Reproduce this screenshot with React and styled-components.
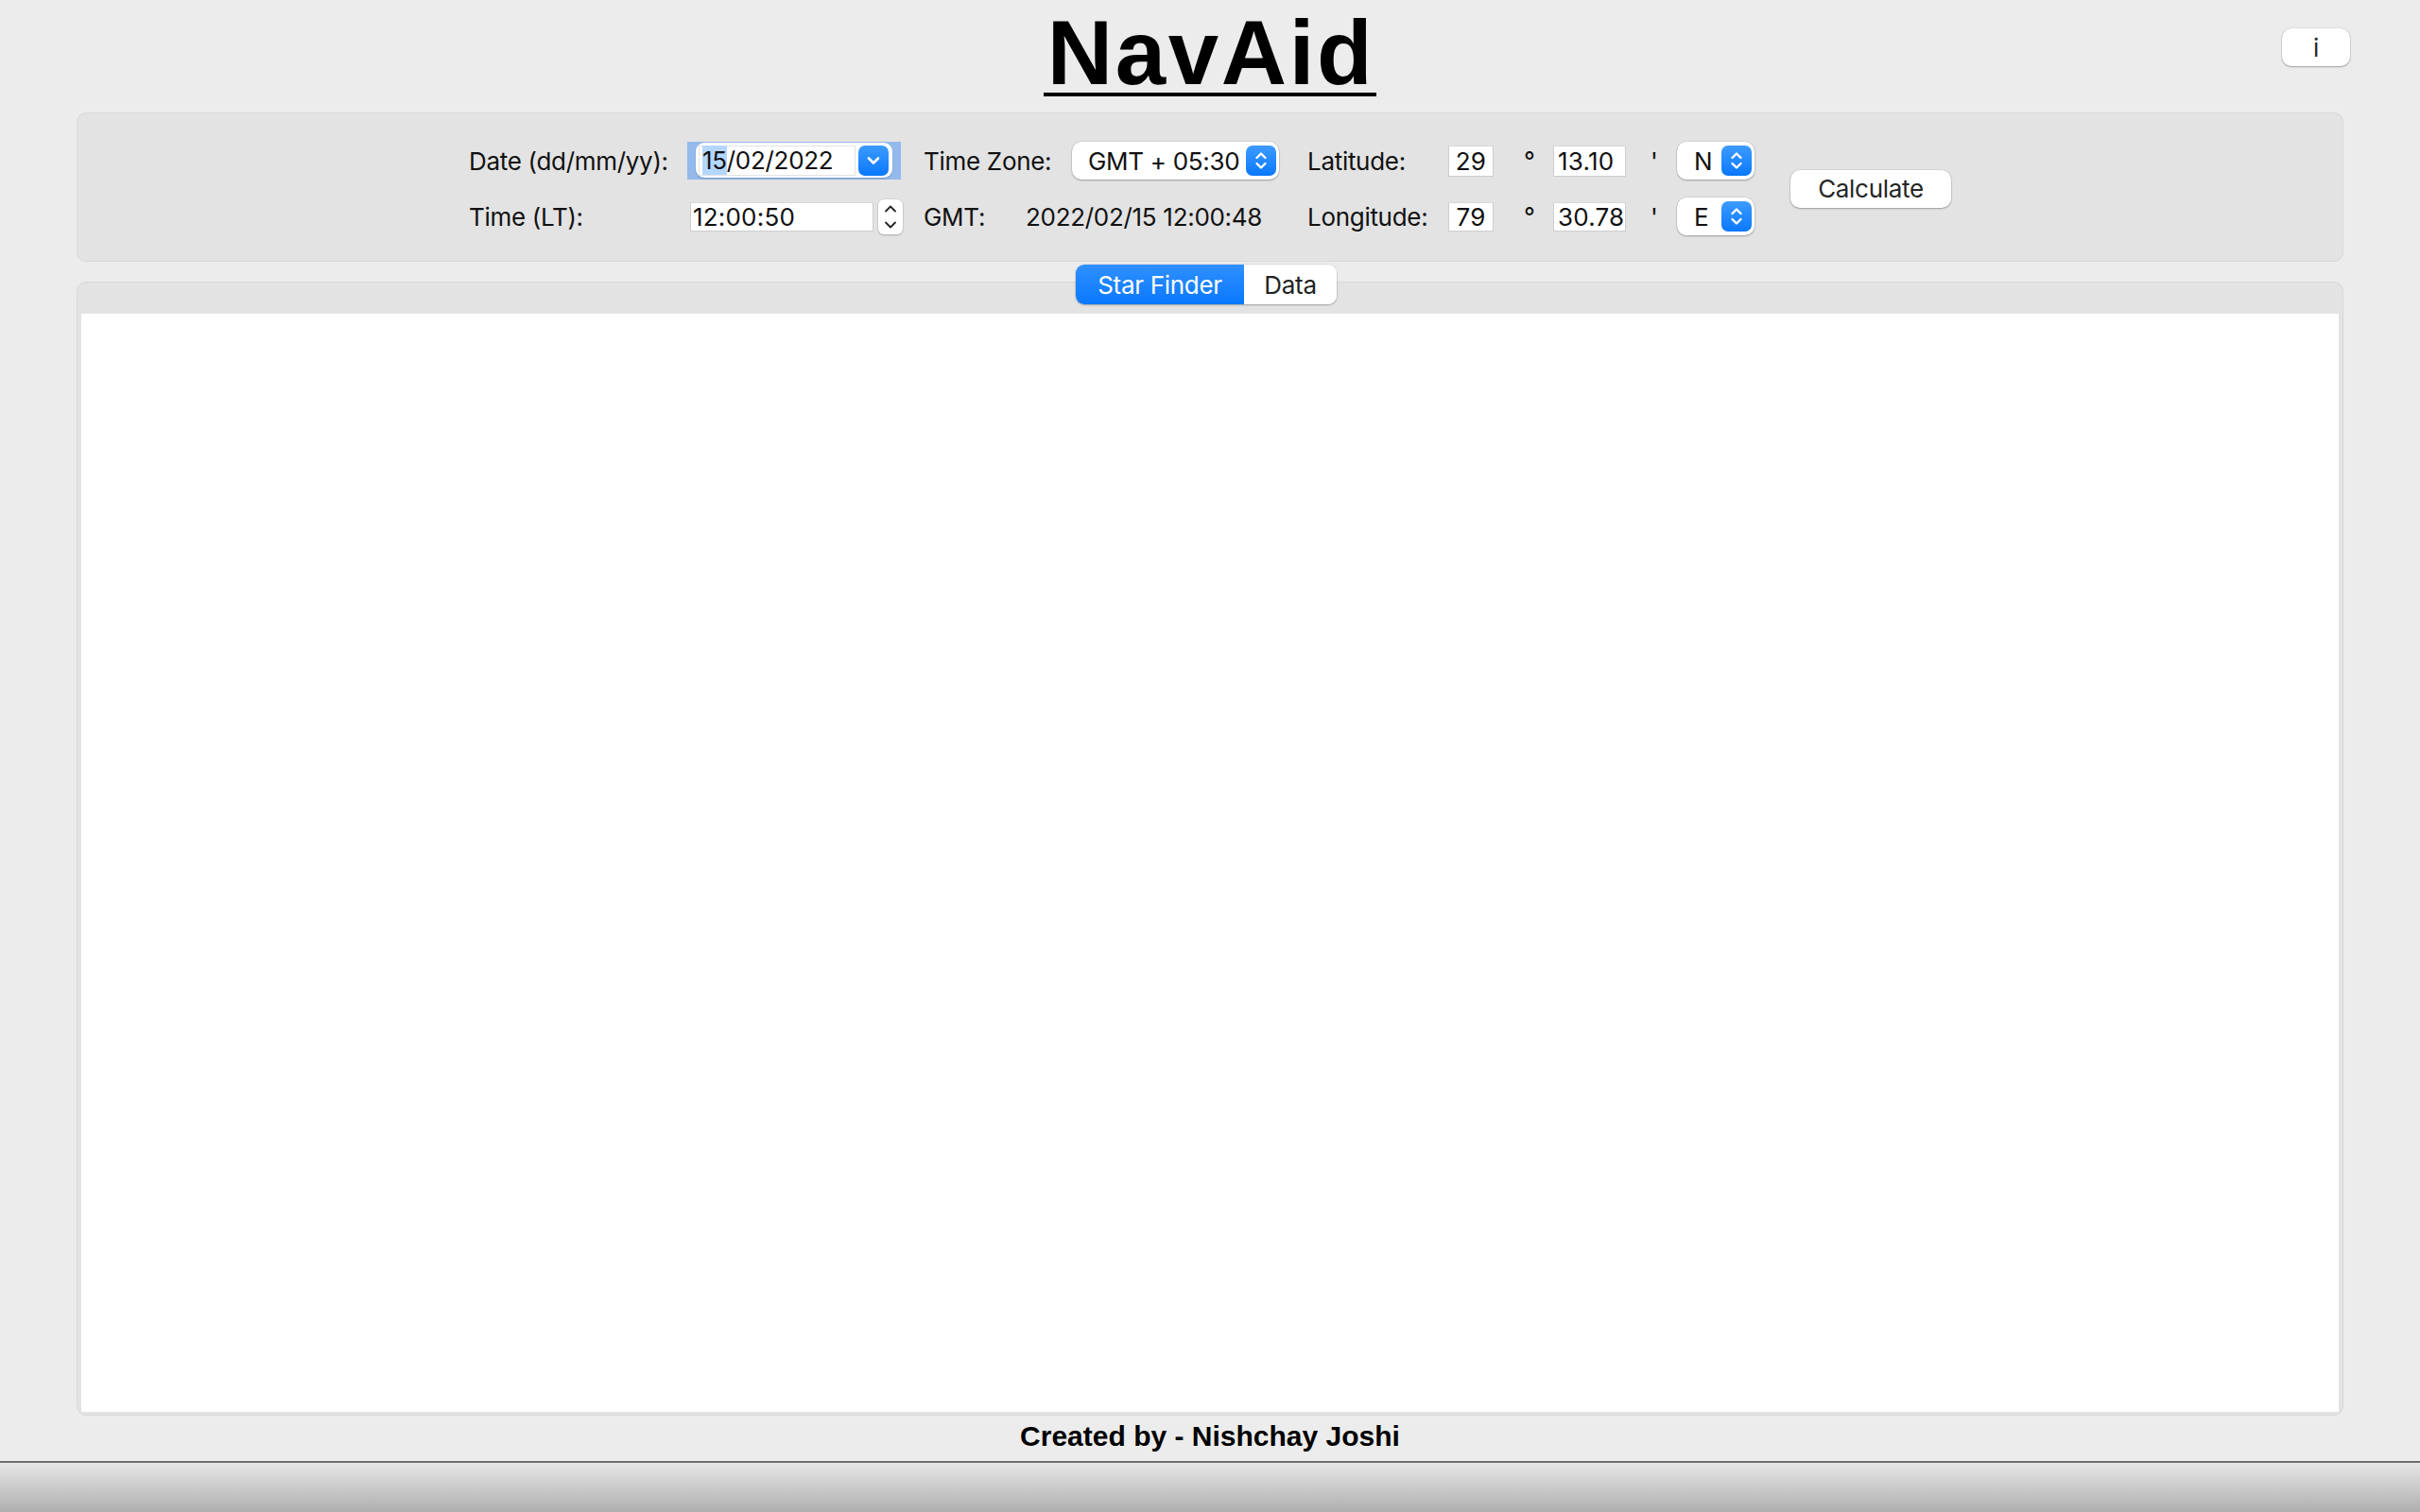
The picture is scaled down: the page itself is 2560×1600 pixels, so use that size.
import React from "react";
import styled, { createGlobalStyle } from "styled-components";

const GlobalStyle = createGlobalStyle`
  html, body { margin: 0; padding: 0; background: #ececec; }
  body { font-family: Inter, "Noto Sans", sans-serif; color: #111; letter-spacing: -0.3px; }
  * { box-sizing: border-box; }
`;

const Page = styled.div`
  height: 100vh;
  display: flex;
  flex-direction: column;
`;

const Header = styled.header`
  flex: none;
  height: 119px;
  display: grid;
  grid-template-columns: 1fr auto 1fr;
  align-items: start;
  padding: 14px 0 0;
`;

const Title = styled.h1`
  grid-column: 2;
  margin: 0;
  padding: 0 2px 0 4px;
  font-family: "Liberation Sans", Arial, sans-serif;
  font-weight: 700;
  font-size: 96px;
  line-height: 84px;
  letter-spacing: 2.6px;
  color: #000;
  border-bottom: 4px solid #000;
`;

const MacButton = styled.button`
  background: #fff;
  border: none;
  border-radius: 10px;
  box-shadow: 0 0 0 0.5px rgba(0, 0, 0, 0.12), 0 1px 2px rgba(0, 0, 0, 0.28);
  font-family: Inter, "Noto Sans", sans-serif;
  font-size: 26px;
  letter-spacing: -0.3px;
  color: #262626;
  padding: 0;
  cursor: default;
`;

const InfoButton = styled(MacButton)`
  grid-column: 3;
  justify-self: end;
  width: 72px;
  height: 40px;
  margin: 16px 74px 0 0;
`;

const TopPanel = styled.section`
  flex: none;
  height: 158px;
  margin: 0 81px;
  background: #e3e3e3;
  border: 1px solid #d9d9d9;
  border-radius: 10px;
  padding: 28px 0 25px;
  display: grid;
  grid-template-columns: 231px 250px 108px 298px 149px 80px 31px 103px 28px 120px 170px;
  grid-template-rows: 44px 44px;
  row-gap: 15px;
  align-items: center;
  justify-content: center;
`;

const Label = styled.span`
  font-size: 26px;
  white-space: nowrap;
  color: #111;
`;

const Unit = styled(Label)`
  align-self: center;
  margin-top: ${(p) => p.$top || 0}px;
`;

const Knob = styled.span`
  flex: none;
  width: 32px;
  height: 32px;
  border-radius: 7px;
  background: linear-gradient(#3d9bff, #0a78ff);
  display: flex;
  align-items: center;
  justify-content: center;
`;

const Popup = styled.div`
  width: ${(p) => p.$w}px;
  height: 40px;
  margin-left: ${(p) => p.$ml || 0}px;
  background: #fff;
  border-radius: 10px;
  box-shadow: 0 0 0 0.5px rgba(0, 0, 0, 0.12), 0 1px 2px rgba(0, 0, 0, 0.28);
  display: flex;
  align-items: center;
  justify-content: space-between;
  padding: 0 3px 0 ${(p) => p.$pl}px;
  font-size: 26px;
  color: #111;
  white-space: nowrap;
`;

const FocusRing = styled.div`
  width: 226px;
  height: 40px;
  background: #94b9ec;
  padding: 1px 9px 2px;
`;

const ComboBody = styled.div`
  height: 100%;
  background: #fff;
  border-radius: 9px;
  box-shadow: 0 1px 2px rgba(0, 0, 0, 0.2);
  display: flex;
  align-items: center;
  gap: 3px;
  padding: 0 4px 0 3px;
`;

const ComboText = styled.div`
  width: 166px;
  height: 32px;
  border: 1px solid #e2e2e2;
  font-size: 26px;
  line-height: 30px;
  padding-left: 3px;
  color: #111;
`;

const Selected = styled.span`
  background: #b3d7ff;
`;

const TimeGroup = styled.div`
  display: flex;
  align-items: center;
  gap: 5px;
  padding-left: 3px;
`;

const Field = styled.div`
  width: ${(p) => p.$w}px;
  height: ${(p) => p.$h || 32}px;
  background: #fff;
  border: 1px solid #cdcdcd;
  border-top-color: #d8d8d8;
  font-size: 26px;
  line-height: ${(p) => (p.$h || 32) - 2}px;
  text-align: ${(p) => p.$align || "left"};
  padding: 0 ${(p) => p.$pad || 2}px;
  color: #111;
  white-space: nowrap;
  letter-spacing: 0.2px;
`;

const Stepper = styled.div`
  width: 26px;
  height: 37px;
  background: #fff;
  border-radius: 6px;
  box-shadow: 0 0 0 0.5px rgba(0, 0, 0, 0.1), 0 1px 2px rgba(0, 0, 0, 0.22);
  display: flex;
  flex-direction: column;
  align-items: center;
  justify-content: space-between;
  padding: 6px 0;
`;

const CalcButton = styled(MacButton)`
  grid-row: span 2;
  width: 170px;
  height: 40px;
`;

const TabSection = styled.div`
  flex: 1;
  display: flex;
  flex-direction: column;
  margin-top: 3px;
  min-height: 0;
`;

const TabBar = styled.div`
  flex: none;
  height: 42px;
  display: flex;
  justify-content: center;
  padding-right: 8px;
  position: relative;
  z-index: 1;
`;

const Segmented = styled.div`
  display: flex;
  background: #fff;
  border-radius: 9px;
  overflow: hidden;
  box-shadow: 0 0 0 0.5px rgba(0, 0, 0, 0.12), 0 1px 2px rgba(0, 0, 0, 0.25);
`;

const Tab = styled.div`
  width: ${(p) => p.$w}px;
  height: 42px;
  display: flex;
  align-items: center;
  justify-content: center;
  font-size: 26px;
  color: ${(p) => (p.$active ? "#fff" : "#222")};
  background: ${(p) => (p.$active ? "linear-gradient(#2f90ff, #0a78ff)" : "#fff")};
`;

const TabPanel = styled.div`
  flex: 1;
  margin: -24px 81px 0;
  background: #e3e3e3;
  border: 1px solid #d8d8d8;
  border-radius: 10px;
  padding: 33px 4px 3px;
  display: flex;
`;

const Canvas = styled.div`
  flex: 1;
  background: #fff;
`;

const Footer = styled.footer`
  flex: none;
  height: 48px;
  line-height: 43px;
  padding-bottom: 5px;
  text-align: center;
  font-family: "Liberation Sans", Arial, sans-serif;
  font-weight: 700;
  font-size: 30px;
  letter-spacing: 0;
  color: #000;
`;

const BottomBar = styled.div`
  flex: none;
  height: 54px;
  border-top: 2px solid #6d6d6d;
  background: linear-gradient(#e6e6e6, #afafaf);
`;

const UpDown = ({ color = "#fff" }) => (
  <svg width="16" height="22" viewBox="0 0 16 22" fill="none">
    <path d="M3.5 8 L8 3.5 L12.5 8" stroke={color} strokeWidth="2.4" strokeLinecap="round" strokeLinejoin="round" />
    <path d="M3.5 14 L8 18.5 L12.5 14" stroke={color} strokeWidth="2.4" strokeLinecap="round" strokeLinejoin="round" />
  </svg>
);

const Down = () => (
  <svg width="16" height="10" viewBox="0 0 16 10" fill="none">
    <path d="M3 2.5 L8 7.5 L13 2.5" stroke="#fff" strokeWidth="2.6" strokeLinecap="round" strokeLinejoin="round" />
  </svg>
);

const Chevron = ({ up }) => (
  <svg width="14" height="8" viewBox="0 0 14 8" fill="none">
    <path d={up ? "M2 6.5 L7 1.5 L12 6.5" : "M2 1.5 L7 6.5 L12 1.5"} stroke="#222" strokeWidth="1.8" strokeLinecap="round" strokeLinejoin="round" />
  </svg>
);

export default function App() {
  return (
    <Page>
      <GlobalStyle />
      <Header>
        <Title>NavAid</Title>
        <InfoButton>i</InfoButton>
      </Header>

      <TopPanel>
        <Label>Date (dd/mm/yy):</Label>
        <FocusRing>
          <ComboBody>
            <ComboText>
              <Selected>15</Selected>/02/2022
            </ComboText>
            <Knob>
              <Down />
            </Knob>
          </ComboBody>
        </FocusRing>
        <Label>Time Zone:</Label>
        <Popup $w={219} $ml={49} $pl={17}>
          GMT + 05:30
          <Knob>
            <UpDown />
          </Knob>
        </Popup>
        <Label>Latitude:</Label>
        <Field $w={48} $h={33} $align="center">29</Field>
        <Unit $top={-2}>°</Unit>
        <Field $w={77} $h={33} $pad={4}>13.10</Field>
        <Unit>'</Unit>
        <Popup $w={82} $pl={18}>
          N
          <Knob>
            <UpDown />
          </Knob>
        </Popup>
        <CalcButton>Calculate</CalcButton>

        <Label>Time (LT):</Label>
        <TimeGroup>
          <Field $w={194} $h={31}>12:00:50</Field>
          <Stepper>
            <Chevron up />
            <Chevron />
          </Stepper>
        </TimeGroup>
        <Label>GMT:</Label>
        <Label>2022/02/15 12:00:48</Label>
        <Label>Longitude:</Label>
        <Field $w={48} $h={31} $align="center">79</Field>
        <Unit $top={-2}>°</Unit>
        <Field $w={77} $h={31} $pad={4}>30.78</Field>
        <Unit>'</Unit>
        <Popup $w={82} $pl={18}>
          E
          <Knob>
            <UpDown />
          </Knob>
        </Popup>
      </TopPanel>

      <TabSection>
        <TabBar>
          <Segmented>
            <Tab $w={178} $active>Star Finder</Tab>
            <Tab $w={98}>Data</Tab>
          </Segmented>
        </TabBar>
        <TabPanel>
          <Canvas />
        </TabPanel>
      </TabSection>

      <Footer>Created by - Nishchay Joshi</Footer>
      <BottomBar />
    </Page>
  );
}
